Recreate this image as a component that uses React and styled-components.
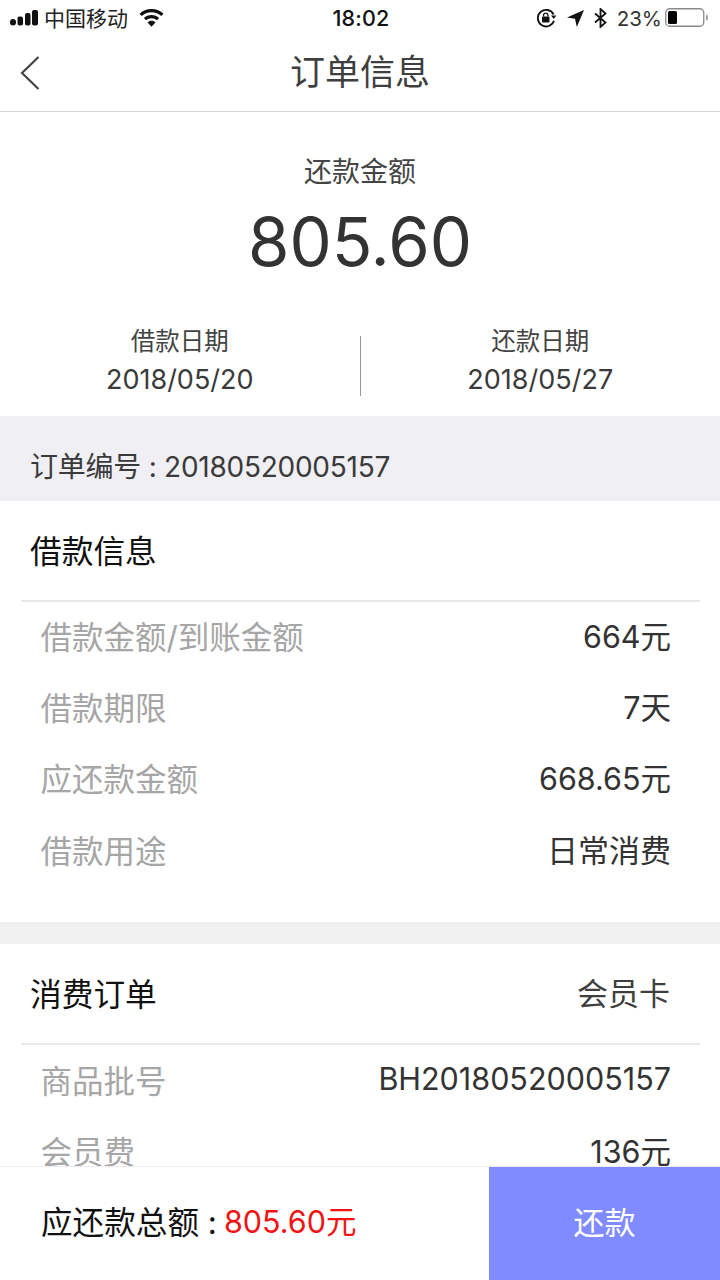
import React from "react";
import styled, { createGlobalStyle } from "styled-components";

const Global = createGlobalStyle`
  html, body { margin: 0; padding: 0; background: #fff; }
  body { font-family: Inter, "Noto Sans CJK SC", sans-serif; }
  * { box-sizing: border-box; }
`;
const Page = styled.div`
  position: relative; width: 720px; height: 1280px; overflow: hidden; background: #fff; color: #333;
`;
const StatusBar = styled.div`
  height: 40px; padding: 0 11px 4px 10px; display: grid; grid-template-columns: 1fr auto 1fr; align-items: center; color: #111;
`;
const StatusLeft = styled.div`display: flex; align-items: center; gap: 5px; font-size: 21px; color: #222;`;
const Carrier = styled.span`margin-right: 6px; line-height: 1;`;
const Clock = styled.div`font-size: 21.5px; font-weight: 500; letter-spacing: 0.2px; margin-left: 3px;`;
const StatusRight = styled.div`display: flex; align-items: center; justify-content: flex-end; gap: 10px;`;
const Percent = styled.span`font-size: 20.500px; color: #333; margin-right: -7px;`;
const NavBar = styled.div`
  height: 72px; display: flex; align-items: center; justify-content: center; position: relative; border-bottom: 1px solid #d9d9d9;
`;
const Back = styled.svg`position: absolute; left: 20px; top: 15px; width: 20px; height: 36px;`;
const Title = styled.div`font-size: 35px; color: #3f3f3f; line-height: 1; margin-top: -6px;`;
const Hero = styled.div`display: flex; flex-direction: column; align-items: center; height: 214px; padding-top: 44px;`;
const HeroLabel = styled.div`font-size: 28px; line-height: 32px; color: #444;`;
const HeroAmount = styled.div`font-size: 67px; line-height: 80px; margin-top: 14px; color: #333;`;
const Dates = styled.div`display: grid; grid-template-columns: 1fr 1px 1fr; height: 90px; align-items: start;`;
const DateCol = styled.div`display: flex; flex-direction: column; align-items: center;`;
const DateLabel = styled.div`font-size: 24.500px; line-height: 30px; color: #444;`;
const DateValue = styled.div`font-size: 27px; line-height: 32px; margin-top: 8px; color: #3a3a3a;`;
const Divider = styled.div`width: 1px; height: 60px; margin-top: 10px; background: #9a9a9a;`;
const OrderBand = styled.div`
  height: 85px; background: #efeff4; display: flex; align-items: center; padding: 12px 30px 0; font-size: 28px; letter-spacing: -0.250px; color: #3a3a3a;
`;
const Section = styled.div`height: ${p => p.$h}px;`;
const SectionHead = styled.div`
  height: ${p => p.$h}px; margin: 0 20px 0 21px; padding: 0 30px 4px 9px; display: flex; align-items: center; justify-content: space-between;
  border-bottom: 2px solid #e8e8e8; font-size: 31.700px; color: #111;
`;
const HeadNote = styled.span`font-size: 31px; color: #3f3f3f;`;
const Rows = styled.div`padding: 0 49px 6px 40.500px; margin-top: ${p => p.$offset}px;`;
const Row = styled.div`
  height: 71.300px; display: flex; align-items: center; justify-content: space-between; white-space: nowrap;
`;
const Key = styled.span`color: #a6a6a6; font-size: 31.500px;`;
const Val = styled.span`color: #333; font-size: ${p => (p.$cjk ? 31 : 30.5)}px;`;
const Gap = styled.div`height: 22px; background: #f0f0f0;`;
const Footer = styled.div`
  position: absolute; left: 0; right: 0; bottom: 0; height: 114px; background: #fff; border-top: 1px solid #ececf0;
  display: flex; align-items: stretch;
`;
const Total = styled.div`flex: 1; display: flex; align-items: center; padding: 0 0 7px 41px; font-size: 31.600px; color: #111;`;
const Red = styled.span`color: #f01414; margin-left: 7px; font-size: 30.500px;`;
const Pay = styled.div`width: 231px; background: #808bff; color: #fff; display: flex; align-items: center; justify-content: center; padding-bottom: 7px; font-size: 31px;`;

const Signal = () => (
  <svg width="29" height="16" viewBox="0 0 29 16">
    <rect x="0" y="9" width="6" height="6.500" rx="3" fill="#111"/>
    <rect x="7.500" y="6.500" width="5.500" height="9" rx="2" fill="#111"/>
    <rect x="15" y="3" width="5.500" height="12.500" rx="2" fill="#111"/>
    <rect x="22" y="0" width="6" height="15.500" rx="2" fill="#111"/>
  </svg>
);
const Wifi = () => (
  <svg width="25" height="18" viewBox="0 0 25 18">
    <path d="M12.500 0C7.600 0 3.500 1.900 0.500 4.800L2.700 7.100C5.200 4.800 8.600 3.300 12.500 3.300s7.300 1.500 9.800 3.800l2.200-2.300C21.500 1.900 17.400 0 12.500 0z" fill="#111"/>
    <path d="M12.500 6c-3 0-5.600 1.100-7.600 3l2.200 2.300c1.400-1.300 3.300-2.100 5.400-2.100s4 .8 5.400 2.100L20.100 9c-2-1.900-4.600-3-7.600-3z" fill="#111"/>
    <path d="M12.500 11.800c-1.600 0-3 .6-4 1.600l4 4.300 4-4.300c-1-1-2.400-1.600-4-1.600z" fill="#111"/>
  </svg>
);
const RotationLock = () => (
  <svg width="21" height="20" viewBox="0 0 21 20" fill="none">
    <path d="M17.600 6.500A8.300 8.300 0 1 0 18 12.800" stroke="#111" strokeWidth="1.800"/>
    <path d="M15 7.600h5.400L17.700 11z" fill="#111"/>
    <rect x="6" y="8.500" width="7.500" height="6" rx="1" fill="#111"/>
    <path d="M7.500 8.500V7a2.300 2.300 0 0 1 4.500 0v1.500" stroke="#111" strokeWidth="1.300"/>
  </svg>
);
const Location = () => (
  <svg width="17" height="17" viewBox="0 0 17 17"><path d="M17 0L0 7.500l8 1.200L9.800 17z" fill="#111"/></svg>
);
const Bluetooth = () => (
  <svg width="13" height="20" viewBox="0 0 13 20" fill="none"><path d="M1 5.500l10.500 9L6.500 19V1l5 4.500L1 14.500" stroke="#111" strokeWidth="1.800"/></svg>
);
const Battery = () => (
  <svg width="44" height="20" viewBox="0 0 44 20" fill="none">
    <rect x="0.750" y="0.750" width="38" height="17.500" rx="4" stroke="#8a8a8a" strokeWidth="1.300"/>
    <rect x="3" y="3" width="9" height="13" rx="1.500" fill="#000"/>
    <path d="M41 6.500c1.500.3 2 1.500 2 3s-.5 2.700-2 3z" fill="#999"/>
  </svg>
);

export default function App() {
  return (
    <Page>
      <Global />
      <StatusBar>
        <StatusLeft><Signal /><Carrier>中国移动</Carrier><Wifi /></StatusLeft>
        <Clock>18:02</Clock>
        <StatusRight><RotationLock /><Location /><Bluetooth /><Percent>23%</Percent><Battery /></StatusRight>
      </StatusBar>
      <NavBar>
        <Back viewBox="0 0 20 36" fill="none"><path d="M18.500 2L2 18l16.500 16" stroke="#444" strokeWidth="2.200"/></Back>
        <Title>订单信息</Title>
      </NavBar>
      <Hero>
        <HeroLabel>还款金额</HeroLabel>
        <HeroAmount>805.60</HeroAmount>
      </Hero>
      <Dates>
        <DateCol><DateLabel>借款日期</DateLabel><DateValue>2018/05/20</DateValue></DateCol>
        <Divider />
        <DateCol><DateLabel>还款日期</DateLabel><DateValue>2018/05/27</DateValue></DateCol>
      </Dates>
      <OrderBand>订单编号 : 20180520005157</OrderBand>
      <Section $h={421}>
        <SectionHead $h={101}>借款信息</SectionHead>
        <Rows $offset={-3}>
          <Row><Key>借款金额/到账金额</Key><Val>664元</Val></Row>
          <Row><Key>借款期限</Key><Val>7天</Val></Row>
          <Row><Key>应还款金额</Key><Val>668.65元</Val></Row>
          <Row><Key>借款用途</Key><Val $cjk>日常消费</Val></Row>
        </Rows>
      </Section>
      <Gap />
      <Section $h={336}>
        <SectionHead $h={101}>消费订单<HeadNote>会员卡</HeadNote></SectionHead>
        <Rows $offset={-2}>
          <Row><Key>商品批号</Key><Val>BH20180520005157</Val></Row>
          <Row><Key>会员费</Key><Val>136元</Val></Row>
        </Rows>
      </Section>
      <Footer>
        <Total>应还款总额 :<Red>805.60元</Red></Total>
        <Pay>还款</Pay>
      </Footer>
    </Page>
  );
}
